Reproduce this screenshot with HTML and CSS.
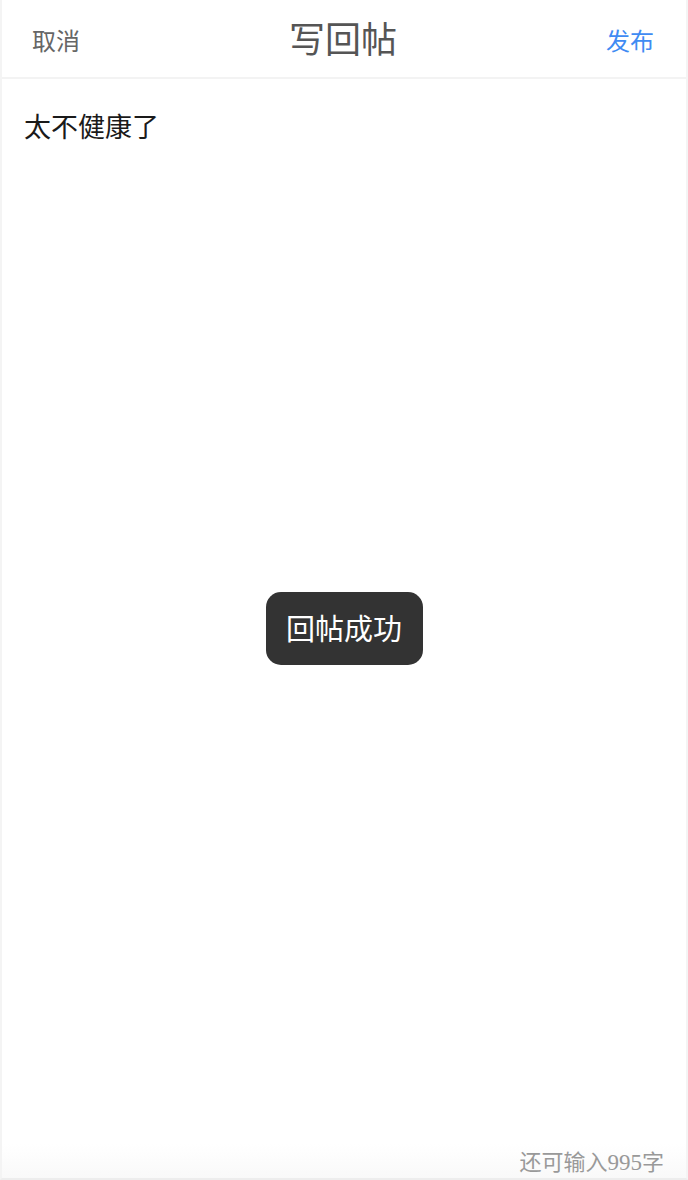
FILE: index.html
```html
<!DOCTYPE html>
<html lang="zh-CN">
<head>
<meta charset="utf-8">
<title>写回帖</title>
<link rel="stylesheet" href="styles.css">
</head>
<body>
<div class="page">
  <header class="topbar">
    <span class="cancel">取消</span>
    <h1 class="title">写回帖</h1>
    <span class="publish">发布</span>
  </header>
  <main class="editor">
    <p class="content">太不健康了</p>
    <div class="toast">回帖成功</div>
  </main>
  <footer class="footer">
    <span class="counter">还可输入<span class="num">995</span>字</span>
  </footer>
</div>
</body>
</html>
```
FILE: styles.css
```css
* { box-sizing: border-box; }
html, body { margin: 0; padding: 0; background: #fff; }
body {
  font-family: "Noto Sans CJK SC", "Noto Sans", sans-serif;
  width: 688px;
  height: 1180px;
}
.page {
  width: 688px;
  height: 1180px;
  display: flex;
  flex-direction: column;
  border-left: 2px solid #f4f4f4;
  border-right: 2px solid #f4f4f4;
  border-bottom: 2px solid #ededed;
}
.topbar {
  height: 79px;
  flex: 0 0 79px;
  display: flex;
  align-items: center;
  justify-content: space-between;
  padding: 0 32px 0 30px;
  border-bottom: 2px solid #f3f3f3;
}
.cancel {
  font-size: 24px;
  color: #666;
  width: 80px;
  line-height: 1;
  margin-top: 2px;
}
.title {
  margin: 0;
  font-size: 36px;
  font-weight: 400;
  color: #555;
  line-height: 1;
  margin-bottom: 4px;
}
.publish {
  font-size: 24px;
  color: #3f8bf3;
  width: 80px;
  text-align: right;
  line-height: 1;
  margin-top: 2px;
}
.editor {
  flex: 1;
  display: flex;
  flex-direction: column;
  align-items: center;
  padding: 29px 22px 0;
}
.content {
  align-self: stretch;
  margin: 0;
  font-size: 27px;
  line-height: 36px;
  color: #1a1a1a;
}
.toast {
  margin-top: 448px;
  background: #333;
  color: #fff;
  font-size: 29px;
  line-height: 1;
  padding: 21px 0 23px;
  border-radius: 15px;
  width: 157px;
  height: 73px;
  text-align: center;
  white-space: nowrap;
}
.footer {
  flex: 0 0 34px;
  display: flex;
  justify-content: flex-end;
  align-items: center;
  padding-right: 22px;
  background: linear-gradient(#fff, #f9f9f9);
}
.counter {
  font-size: 22px;
  color: #999;
  line-height: 1;
}
.num {
  font-family: "Liberation Serif", serif;
  font-size: 23px;
}
```
